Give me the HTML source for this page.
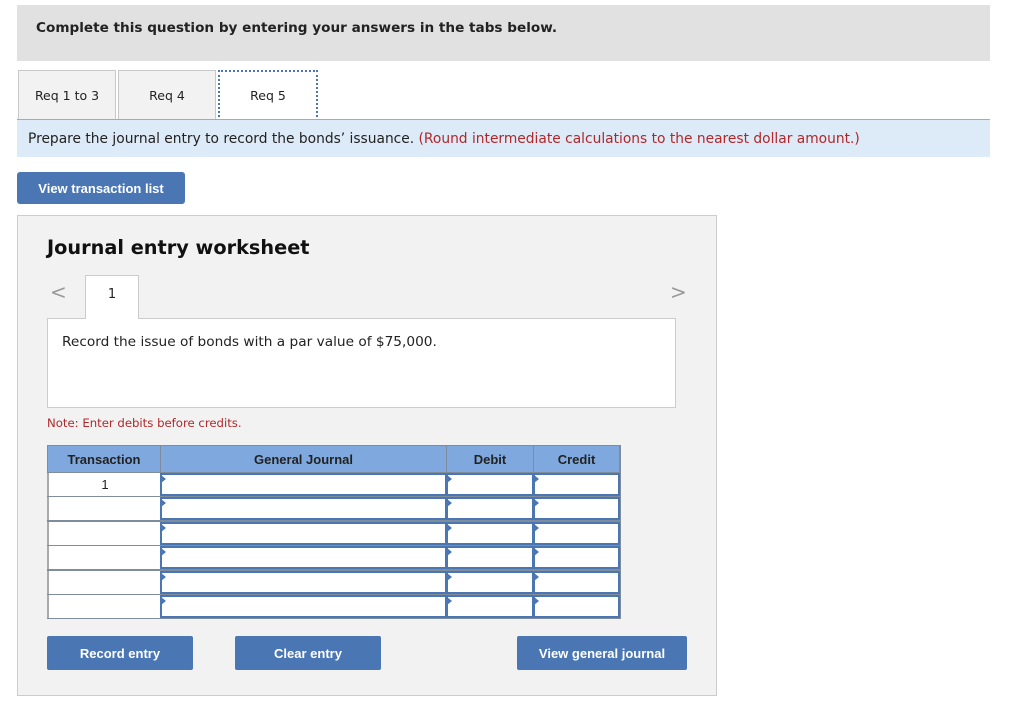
<!DOCTYPE html>
<html><head><meta charset="utf-8"><style>
*{margin:0;padding:0;box-sizing:border-box}
body{width:1024px;height:710px;background:#fff;font-family:"DejaVu Sans",Verdana,sans-serif;font-size:13px;color:#222;position:relative;overflow:hidden}
.a{position:absolute}
.btn{position:absolute;background:#4a76b4;color:#fff;font-family:"Liberation Sans",Arial,sans-serif;font-weight:bold;font-size:13px;display:flex;align-items:center;justify-content:center;border-radius:3px}
.tab{position:absolute;top:70px;height:49px;background:#f2f2f2;border:1px solid #c8c8c8;border-bottom:none;display:flex;align-items:center;justify-content:center;font-size:12.5px}
.th{position:absolute;top:446px;height:26px;background:#7fa9de;font-family:"Liberation Sans",Arial,sans-serif;font-weight:bold;font-size:13px;display:flex;align-items:center;justify-content:center;color:#222}
.tc{position:absolute;left:47px;width:114px;height:23px;background:#fff;border-left:2px solid #aaa;font-family:"Liberation Sans",Arial,sans-serif;text-align:center;line-height:24px}
.in{position:absolute;height:23px;background:#fff;border:2px solid #4a76b4}
.in:before{content:"";position:absolute;left:-1px;top:0;border-left:5px solid #4a76b4;border-top:4px solid transparent;border-bottom:4px solid transparent}
</style></head><body>
<div class="a" style="left:17px;top:5px;width:973px;height:56px;background:#e1e1e1"></div>
<div class="a" style="left:36px;top:20px;font-weight:bold;font-size:13.6px">Complete this question by entering your answers in the tabs below.</div>
<div class="tab" style="left:18px;width:98px">Req 1 to 3</div>
<div class="tab" style="left:118px;width:98px">Req 4</div>
<div class="tab" style="left:218px;width:100px;background:#fff;border:2px dotted #4a76b4;height:51px">Req 5</div>
<div class="a" style="left:17px;top:119px;width:973px;height:1px;background:#aaa"></div>
<div class="a" style="left:17px;top:120px;width:973px;height:37px;background:#ddeaf7"></div>
<div class="a" style="left:28px;top:131px;font-size:13.8px">Prepare the journal entry to record the bonds’ issuance. <span style="color:#b0282a">(Round intermediate calculations to the nearest dollar amount.)</span></div>
<div class="btn" style="left:17px;top:172px;width:168px;height:32px">View transaction list</div>
<div class="a" style="left:17px;top:215px;width:700px;height:481px;background:#f2f2f2;border:1px solid #ccc"></div>
<div class="a" style="left:47px;top:236px;font-weight:bold;font-size:19.3px;color:#111">Journal entry worksheet</div>
<div class="a" style="left:50px;top:280px;font-size:20px;color:#999">&lt;</div>
<div class="a" style="left:670px;top:280px;font-size:20px;color:#999">&gt;</div>
<div class="a" style="left:47px;top:318px;width:629px;height:90px;background:#fff;border:1px solid #ccc"></div>
<div class="a" style="left:85px;top:275px;width:54px;height:44px;background:#fff;border:1px solid #ccc;border-bottom:none;text-align:center;line-height:38px">1</div>
<div class="a" style="left:62px;top:334px;font-size:13.7px">Record the issue of bonds with a par value of $75,000.</div>
<div class="a" style="left:47px;top:416px;font-size:11.7px;color:#b0282a">Note: Enter debits before credits.</div>
<div class="a" style="left:47px;top:445px;width:574px;height:174px;background:#7f8c9c"></div>
<div class="th" style="left:48px;width:112px">Transaction</div>
<div class="th" style="left:161px;width:285px">General Journal</div>
<div class="th" style="left:447px;width:86px">Debit</div>
<div class="th" style="left:534px;width:85px">Credit</div>
<div class="a" style="left:47px;top:472px;width:573px;height:147px;background:#7f8c9c"></div>
<div class="tc" style="top:473px">1</div>
<div class="tc" style="top:497px"></div>
<div class="tc" style="top:522px"></div>
<div class="tc" style="top:546px"></div>
<div class="tc" style="top:571px"></div>
<div class="tc" style="top:595px"></div>
<div class="in" style="left:160px;top:473px;width:287px"></div><div class="in" style="left:446px;top:473px;width:88px"></div><div class="in" style="left:533px;top:473px;width:87px"></div>
<div class="in" style="left:160px;top:497px;width:287px"></div><div class="in" style="left:446px;top:497px;width:88px"></div><div class="in" style="left:533px;top:497px;width:87px"></div>
<div class="in" style="left:160px;top:522px;width:287px"></div><div class="in" style="left:446px;top:522px;width:88px"></div><div class="in" style="left:533px;top:522px;width:87px"></div>
<div class="in" style="left:160px;top:546px;width:287px"></div><div class="in" style="left:446px;top:546px;width:88px"></div><div class="in" style="left:533px;top:546px;width:87px"></div>
<div class="in" style="left:160px;top:571px;width:287px"></div><div class="in" style="left:446px;top:571px;width:88px"></div><div class="in" style="left:533px;top:571px;width:87px"></div>
<div class="in" style="left:160px;top:595px;width:287px"></div><div class="in" style="left:446px;top:595px;width:88px"></div><div class="in" style="left:533px;top:595px;width:87px"></div>
<div class="btn" style="left:47px;top:636px;width:146px;height:34px;border-radius:2px">Record entry</div>
<div class="btn" style="left:235px;top:636px;width:146px;height:34px;border-radius:2px">Clear entry</div>
<div class="btn" style="left:517px;top:636px;width:170px;height:34px;border-radius:2px">View general journal</div>
</body></html>
